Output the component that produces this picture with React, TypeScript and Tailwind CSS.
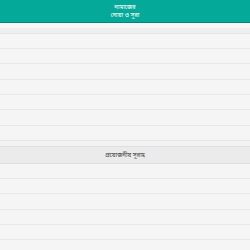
export default function App() {
  const topRows = [34, 49, 64, 80, 95, 110, 126, 141];
  const bottomRows = [178, 193, 209, 224, 239, 250];
  const topHeights = topRows.slice(1).map((y, i) => y - topRows[i]);
  const bottomHeights = [15, 15, 16, 15, 15, 11];
  return (
    <div className="w-[250px] h-[250px] overflow-hidden bg-[#f5f5f5] flex flex-col" style={{ fontFamily: '"Noto Sans", "Noto Sans Bengali", "Liberation Sans", sans-serif' }}>
      <div className="h-[22px] bg-[#04a99a] flex flex-col items-center justify-center text-white text-[6px] leading-[8px] shrink-0">
        <span>নামাজের</span>
        <span>দোয়া ও সূরা</span>
      </div>
      <div className="h-[1px] bg-[#038579] shrink-0" />
      <div className="h-[5px] bg-[#f7f7f7] shrink-0" />
      <div className="h-[5px] bg-[#efefef] border-b border-[#e6e6e6] shrink-0 box-content" />
      {topHeights.map((h, i) => (
        <div key={i} className="shrink-0 border-b border-[#e8e8e8] bg-[#f5f5f5]" style={{ height: h }} />
      ))}
      <div className="h-[5px] bg-[#f2f2f2] border-b border-[#e0e0e0] shrink-0 box-content" />
      <div className="h-[16px] bg-[#ebebeb] border-b border-[#dedede] flex items-center justify-center text-[6px] text-[#444444] shrink-0 box-content">
        <span>প্রয়োজনীয় সূরাহ</span>
      </div>
      {bottomHeights.map((h, i) => (
        <div key={i} className="shrink-0 border-b border-[#e8e8e8] bg-[#f5f5f5]" style={{ height: h }} />
      ))}
    </div>
  );
}
